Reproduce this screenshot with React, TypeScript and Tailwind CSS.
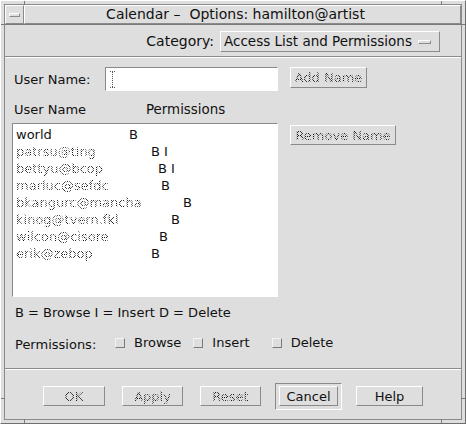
import React from "react";

const stip =
  "bg-[image:repeating-conic-gradient(#1a1a1a_0_25%,transparent_0_50%)] bg-[length:2px_2px] bg-clip-text text-transparent";

const raised = "border-t border-l border-t-white border-l-white border-r border-b border-r-[#8a8a8a] border-b-[#8a8a8a]";
const sunken = "border-t border-l border-t-[#8a8a8a] border-l-[#8a8a8a] border-r border-b border-r-white border-b-white";

const rows = [
  { name: "world", perm: "B", x: 128, plain: true },
  { name: "patrsu@ting", perm: "B I", x: 150 },
  { name: "bettyu@bcop", perm: "B I", x: 157 },
  { name: "marluc@sefdc", perm: "B", x: 160 },
  { name: "bkangurc@mancha", perm: "B", x: 182 },
  { name: "kinog@tvern.fkl", perm: "B", x: 170 },
  { name: "wilcon@cisore", perm: "B", x: 158 },
  { name: "erik@zebop", perm: "B", x: 150 },
];

function Btn({
  label,
  disabled,
  w,
  className = "",
}: {
  label: string;
  disabled?: boolean;
  w: string;
  className?: string;
}) {
  return (
    <div className={`${raised} ${w} h-[20px] flex items-center justify-center ${className}`}>
      <span className={disabled ? stip : "text-[#111]"}>{label}</span>
    </div>
  );
}

function Check({ label, className = "" }: { label: string; className?: string }) {
  return (
    <div className={`flex items-center ${className}`}>
      <div className="w-[10px] h-[10px] border-t border-l border-t-[#f4f4f4] border-l-[#f4f4f4] border-r border-b border-r-[#7a7a7a] border-b-[#7a7a7a] bg-[#dedede]" />
      <span className="ml-[9px]">{label}</span>
    </div>
  );
}

export default function App() {
  return (
    <div className="w-[466px] h-[424px] bg-[#dedede] font-['DejaVu_Sans',sans-serif] text-[13px] text-[#111] leading-[17px]">
      <div className="relative w-[466px] h-[424px] border-t border-l border-t-white border-l-white border-r border-b border-r-[#6e6e6e] border-b-[#6e6e6e] p-[3px]">
        {/* frame notches */}
        <div className="absolute left-[23px] top-0 w-px h-[4px] bg-[#7a7a7a]" />
        <div className="absolute left-[440px] top-0 w-px h-[4px] bg-[#7a7a7a]" />
        <div className="absolute left-0 top-[23px] w-[4px] h-px bg-[#7a7a7a]" />
        <div className="absolute right-0 top-[23px] w-[4px] h-px bg-[#7a7a7a]" />
        <div className="absolute left-0 top-[397px] w-[4px] h-px bg-[#7a7a7a]" />
        <div className="absolute right-0 top-[397px] w-[4px] h-px bg-[#7a7a7a]" />
        <div className="absolute left-[23px] bottom-0 w-px h-[4px] bg-[#7a7a7a]" />
        <div className="absolute left-[440px] bottom-0 w-px h-[4px] bg-[#7a7a7a]" />

        <div className="w-full h-full border border-[#8a8a8a] flex flex-col">
          {/* title bar */}
          <div className="flex h-[20px] border-b border-b-[#7a7a7a]">
            <div className={`${raised} w-[19px] h-[19px] flex items-center justify-center`}>
              <div className={`${raised} w-[11px] h-[4px]`} />
            </div>
            <div className={`${raised} flex-1 h-[19px] flex items-center justify-center pr-[14px]`}>
              <span className="whitespace-pre text-[14px]">Calendar –  Options: hamilton@artist</span>
            </div>
          </div>

          {/* client */}
          <div className="flex-1 flex flex-col">
            {/* category row */}
            <div className="flex justify-end items-center pt-[6px] pr-[21px]">
              <span className="text-[14px]">Category:</span>
              <div className={`${raised} ml-[6px] w-[220px] h-[21px] flex items-center pl-[3px]`}>
                <span className="text-[13.5px] w-[194px]">Access List and Permissions</span>
                <div className={`${raised} w-[13px] h-[4px]`} />
              </div>
            </div>
            <div className="mt-[4px] h-[2px] border-t border-t-[#8a8a8a] border-b border-b-white" />

            {/* user name row */}
            <div className="flex items-start mt-[9px] pl-[9px]">
              <span className="w-[91px] mt-[4px]">User Name:</span>
              <div className={`${sunken} bg-white w-[173px] h-[24px] flex items-center pl-[4px]`}>
                <svg width="5" height="17" viewBox="0 0 5 17">
                  <path d="M0 0.5H5M0 16.5H5M2.5 1V16" stroke="#555" strokeWidth="1" strokeDasharray="1 1" />
                </svg>
              </div>
              <Btn label="Add Name" disabled w="w-[77px]" className="ml-[12px] h-[21px]" />
            </div>

            {/* headers */}
            <div className="flex mt-[10px] pl-[9px] h-[17px]">
              <span className="w-[132px]">User Name</span>
              <span className="text-[13.4px]">Permissions</span>
            </div>

            {/* list + remove */}
            <div className="flex items-start mt-[5px] pl-[7px]">
              <div className={`${sunken} bg-white w-[266px] h-[174px] pt-[2px] pl-[3px] flex flex-col`}>
                {rows.map((r) => (
                  <div key={r.name} className="flex h-[17px] items-center whitespace-pre">
                    <span style={{ width: r.x - 15 }} className={r.plain ? "" : stip}>
                      {r.name}
                    </span>
                    <span className="whitespace-pre">{r.perm}</span>
                  </div>
                ))}
              </div>
              <Btn label="Remove Name" disabled w="w-[106px]" className="ml-[12px] mt-[2px]" />
            </div>

            {/* legend */}
            <div className="mt-[7px] pl-[10px] h-[17px]">B = Browse I = Insert D = Delete</div>

            {/* permissions */}
            <div className="flex items-center mt-[13px] pl-[10px] h-[17px]">
              <span className="w-[100px] mt-[3px]">Permissions:</span>
              <Check label="Browse" />
              <Check label="Insert" className="ml-[12px]" />
              <Check label="Delete" className="ml-[22px]" />
            </div>

            {/* separator */}
            <div className="mt-auto h-[2px] border-t border-t-[#8a8a8a] border-b border-b-white" />

            {/* buttons */}
            <div className="flex items-start h-[49px] pt-[13px] pl-[38px]">
              <Btn label="OK" disabled w="w-[62px]" className="mt-[3px]" />
              <Btn label="Apply" disabled w="w-[61px]" className="ml-[17px] mt-[3px]" />
              <Btn label="Reset" disabled w="w-[61px]" className="ml-[17px] mt-[3px]" />
              <div className={`${sunken} ml-[14px] w-[67px] h-[27px] pt-[2px] px-[3px]`}>
                <Btn label="Cancel" w="w-[59px]" />
              </div>
              <Btn label="Help" w="w-[67px]" className="ml-[14px] mt-[3px]" />
            </div>
          </div>
        </div>
      </div>
    </div>
  );
}
